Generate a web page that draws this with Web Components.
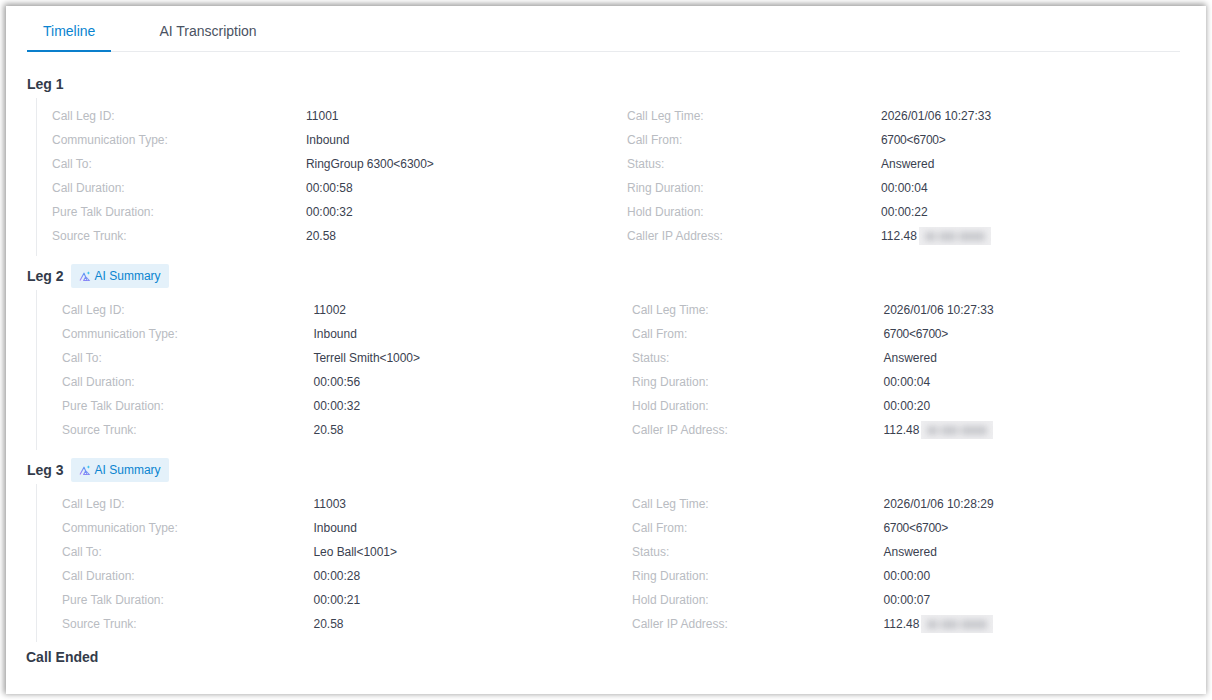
<!DOCTYPE html>
<html><head><meta charset="utf-8"><style>
html,body{margin:0;padding:0;background:#fff;height:700px;overflow:hidden}
body{font-family:"Liberation Sans",Arial,sans-serif;box-sizing:border-box;padding:6px;}
</style></head><body>
<template id="t-card"><style>
:host{display:block;box-sizing:border-box;width:1200px;height:688px;background:#fff;padding:0 26px 0 21px;box-shadow:-1px -1px 6px 1px rgba(0,0,0,.4)}
</style><slot></slot></template>
<template id="t-tabs"><style>
:host{display:flex;height:45px;border-bottom:1px solid #e9ebee;box-sizing:content-box;margin-bottom:20px}
.tab{height:45px;box-sizing:border-box;padding:0 16px;font-size:14px;line-height:50px;color:#4a5262;margin-right:16px;white-space:nowrap}
.on{color:#0a84d0;border-bottom:2px solid #0a7fcc;margin-bottom:-1px;height:46px;margin-right:32px}
</style><div class="tab on">Timeline</div><div class="tab">AI Transcription</div></template>
<template id="t-leg"><style>
:host{display:block}
.head{display:flex;align-items:center;height:24px;gap:7px;font-size:14px;font-weight:700;color:#333b4a}
.body{margin:2px 0 var(--mb,8px) 9px;border-left:1px solid #e9ebee;padding:var(--pt,6px) 0 var(--pb,8px) var(--pad,15px);display:grid;grid-template-columns:var(--cols);grid-auto-rows:24px;font-size:12px;line-height:24px;height:144px}
</style><div class="head"><span id="n"></span><slot name="tag"></slot></div><div class="body"><slot></slot></div></template>
<template id="t-cell"><style>
:host{display:block;white-space:nowrap}
:host([k]){color:#b9bcc2}
:host(:not([k])){color:#3a4150}
:host([id6700]){letter-spacing:-.3px}
:host([tight]){letter-spacing:-.05px}
</style><slot></slot></template>
<template id="t-tag"><style>
:host{display:inline-flex;align-items:center;height:24px;box-sizing:border-box;padding:0 8px;gap:4px;background:#e4f1fa;border-radius:2px;color:#0a84d0;font-size:12px;font-weight:400}
svg{display:block}
</style><svg width="12" height="12" viewBox="0 0 12 12" fill="none"><defs><linearGradient id="g" x1="0" y1="1" x2="1" y2="0"><stop offset="0" stop-color="#b07cf8"/><stop offset="1" stop-color="#3f9cf2"/></linearGradient></defs><path d="M1 10.5 5 3.2 8.2 10.5H4.6L6.6 7" stroke="url(#g)" stroke-width="1.1" stroke-linejoin="round"/><path d="M6.8 6.6 10.6 10.5H8.2" stroke="url(#g)" stroke-width="1"/><path d="M9.4 1.2l.5 1.3 1.3.5-1.3.5-.5 1.3-.5-1.3-1.3-.5 1.3-.5z" fill="#2fc0ee"/></svg><span><slot></slot></span></template>
<template id="t-masked"><style>
:host{display:inline-flex;align-items:center;vertical-align:top;height:24px}
.b{display:block;width:72px;height:18px;margin-left:2px;background:#eeeef0;filter:blur(.5px);position:relative;overflow:hidden}
.d{display:flex;gap:3px;height:100%;align-items:center;padding-left:6px;filter:blur(3px)}
i{display:block;height:9px;background:#c8c9cd}
</style><slot></slot><span class="b"><span class="d"><i style="width:11px"></i><i style="width:17px"></i><i style="width:26px"></i></span></span></template>
<template id="t-end"><style>
:host{display:block;font-size:14px;font-weight:700;color:#333b4a;line-height:24px;margin:0 0 0 -1px}
</style><slot></slot></template>
<x-card>
<x-tabs></x-tabs>
<x-leg name="Leg 1" style="--cols:254px 321px 254px 1fr;--pad:15px">
<x-c k>Call Leg ID:</x-c><x-c>11001</x-c><x-c k>Call Leg Time:</x-c><x-c>2026/01/06 10:27:33</x-c>
<x-c k>Communication Type:</x-c><x-c>Inbound</x-c><x-c k>Call From:</x-c><x-c id6700>6700&lt;6700&gt;</x-c>
<x-c k>Call To:</x-c><x-c tight>RingGroup 6300&lt;6300&gt;</x-c><x-c k>Status:</x-c><x-c>Answered</x-c>
<x-c k>Call Duration:</x-c><x-c>00:00:58</x-c><x-c k>Ring Duration:</x-c><x-c>00:00:04</x-c>
<x-c k>Pure Talk Duration:</x-c><x-c>00:00:32</x-c><x-c k>Hold Duration:</x-c><x-c>00:00:22</x-c>
<x-c k>Source Trunk:</x-c><x-c>20.58</x-c><x-c k>Caller IP Address:</x-c><x-c><x-masked>112.48</x-masked></x-c>
</x-leg>
<x-leg name="Leg 2" style="--cols:251.5px 318.5px 251.5px 1fr;--pad:25px;--pt:8px">
<x-tag slot="tag">AI Summary</x-tag>
<x-c k>Call Leg ID:</x-c><x-c>11002</x-c><x-c k>Call Leg Time:</x-c><x-c>2026/01/06 10:27:33</x-c>
<x-c k>Communication Type:</x-c><x-c>Inbound</x-c><x-c k>Call From:</x-c><x-c id6700>6700&lt;6700&gt;</x-c>
<x-c k>Call To:</x-c><x-c tight>Terrell Smith&lt;1000&gt;</x-c><x-c k>Status:</x-c><x-c>Answered</x-c>
<x-c k>Call Duration:</x-c><x-c>00:00:56</x-c><x-c k>Ring Duration:</x-c><x-c>00:00:04</x-c>
<x-c k>Pure Talk Duration:</x-c><x-c>00:00:32</x-c><x-c k>Hold Duration:</x-c><x-c>00:00:20</x-c>
<x-c k>Source Trunk:</x-c><x-c>20.58</x-c><x-c k>Caller IP Address:</x-c><x-c><x-masked>112.48</x-masked></x-c>
</x-leg>
<x-leg name="Leg 3" style="--cols:251.5px 318.5px 251.5px 1fr;--pad:25px;--pt:8px;--pb:6px;--mb:3px">
<x-tag slot="tag">AI Summary</x-tag>
<x-c k>Call Leg ID:</x-c><x-c>11003</x-c><x-c k>Call Leg Time:</x-c><x-c>2026/01/06 10:28:29</x-c>
<x-c k>Communication Type:</x-c><x-c>Inbound</x-c><x-c k>Call From:</x-c><x-c id6700>6700&lt;6700&gt;</x-c>
<x-c k>Call To:</x-c><x-c tight>Leo Ball&lt;1001&gt;</x-c><x-c k>Status:</x-c><x-c>Answered</x-c>
<x-c k>Call Duration:</x-c><x-c>00:00:28</x-c><x-c k>Ring Duration:</x-c><x-c>00:00:00</x-c>
<x-c k>Pure Talk Duration:</x-c><x-c>00:00:21</x-c><x-c k>Hold Duration:</x-c><x-c>00:00:07</x-c>
<x-c k>Source Trunk:</x-c><x-c>20.58</x-c><x-c k>Caller IP Address:</x-c><x-c><x-masked>112.48</x-masked></x-c>
</x-leg>
<x-end>Call Ended</x-end>
</x-card>
<script>
function def(name,tpl,init){customElements.define(name,class extends HTMLElement{constructor(){super();this.attachShadow({mode:'open'}).appendChild(document.getElementById(tpl).content.cloneNode(true));}connectedCallback(){init&&init(this)}})}
def('x-card','t-card');def('x-tabs','t-tabs');def('x-c','t-cell');def('x-tag','t-tag');def('x-masked','t-masked');def('x-end','t-end');
def('x-leg','t-leg',e=>{e.shadowRoot.getElementById('n').textContent=e.getAttribute('name')});
</script>
</body></html>
